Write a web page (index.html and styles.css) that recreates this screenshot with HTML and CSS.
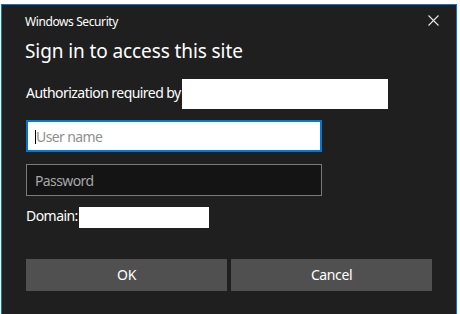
FILE: index.html
```html
<!DOCTYPE html>
<html lang="en">
<head>
    <meta charset="UTF-8">
    <meta name="viewport" content="width=device-width, initial-scale=1.0">
    <title>Windows Security</title>
    <link rel="stylesheet" href="styles.css">
</head>
<body>
    <div class="dialog">
        <div class="titlebar">
            <span class="title">Windows Security</span>
            <svg class="close" width="11" height="11" viewBox="0 0 11 11">
                <path d="M0.5 0.5 L10.5 10.5 M10.5 0.5 L0.5 10.5" stroke="#e6e6e6" stroke-width="1.1" fill="none"/>
            </svg>
        </div>

        <div class="content">
            <h1>Sign in to access this site</h1>

            <div class="auth">
                <span class="label">Authorization required by</span>
                <span class="redact redact-site"></span>
            </div>

            <div class="field field-active">
                <span class="caret"></span>
                <span class="placeholder">User name</span>
            </div>
            <div class="field field-password">
                <span class="placeholder">Password</span>
            </div>

            <div class="domain">
                <span class="label">Domain:</span>
                <span class="redact redact-domain"></span>
            </div>

            <div class="buttons">
                <button>OK</button>
                <button>Cancel</button>
            </div>
        </div>
    </div>
</body>
</html>
```

FILE: styles.css
```css
body {
    margin: 0;
    background-color: #ffffff;
    font-family: "Noto Sans", "Open Sans", sans-serif;
    color: #ffffff;
}
.dialog {
    margin: 4px 0 0 1px;
    width: 454px;
    height: 310px;
    border: 1px solid #0078d7;
    border-bottom: none;
    background-color: #1f1f1f;
}
.titlebar {
    display: flex;
    justify-content: space-between;
    align-items: center;
    height: 32px;
    padding: 0 17px 0 23px;
}
.title {
    font-size: 12px;
    letter-spacing: -0.4px;
}
.close {
    margin-top: -1px;
}
.content {
    padding: 0 24px;
}
h1 {
    margin: 2px 0 0 -1px;
    font-size: 19px;
    font-weight: normal;
    line-height: 24px;
    letter-spacing: -0.1px;
}
.auth {
    display: flex;
    align-items: center;
    height: 30px;
    margin-top: 16px;
}
.label {
    font-size: 14px;
    letter-spacing: -0.55px;
    padding-bottom: 3px;
}
.redact {
    background-color: #ffffff;
}
.redact-site {
    width: 206px;
    height: 30px;
    margin-left: 1px;
}
.field {
    display: flex;
    align-items: center;
    box-sizing: border-box;
    width: 296px;
    height: 32px;
    font-size: 14px;
    letter-spacing: -0.6px;
}
.field-active {
    margin-top: 11px;
    border: 2px solid #0078d7;
    background-color: #ffffff;
    padding: 0 7px;
}
.field-active .placeholder {
    color: #8f8f8f;
}
.caret {
    width: 1px;
    height: 14px;
    margin-top: 2px;
    background-color: #000000;
}
.field-password {
    margin-top: 12px;
    border: 1px solid #7a7a7a;
    background-color: #141414;
    padding: 0 8px;
}
.field-password .placeholder {
    color: #a6a6a6;
}
.placeholder {
    padding-top: 1px;
}
.domain {
    display: flex;
    align-items: center;
    height: 22px;
    margin-top: 10px;
}
.redact-domain {
    width: 130px;
    height: 21px;
    margin-left: 1px;
}
.buttons {
    display: flex;
    gap: 4px;
    margin-top: 31px;
}
button {
    width: 201px;
    height: 32px;
    border: none;
    background-color: #505050;
    color: #ffffff;
    font-family: inherit;
    font-size: 14px;
    letter-spacing: -0.4px;
    padding: 0 0 2px;
}
```
